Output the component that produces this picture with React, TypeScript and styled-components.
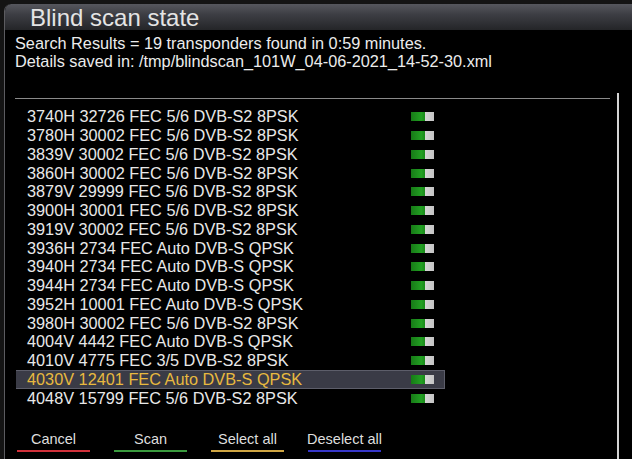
import styled, { createGlobalStyle } from "styled-components";

const GlobalStyle = createGlobalStyle`
    html, body {
        margin: 0;
        padding: 0;
        background: #141414;
        overflow: hidden;
    }
    body {
        font-family: "Liberation Sans", Arial, sans-serif;
        color: #e6e6e6;
    }
`;

interface Transponder {
    label: string
}

const transponders: Transponder[] = [
    { label: "3740H 32726 FEC 5/6 DVB-S2 8PSK" },
    { label: "3780H 30002 FEC 5/6 DVB-S2 8PSK" },
    { label: "3839V 30002 FEC 5/6 DVB-S2 8PSK" },
    { label: "3860H 30002 FEC 5/6 DVB-S2 8PSK" },
    { label: "3879V 29999 FEC 5/6 DVB-S2 8PSK" },
    { label: "3900H 30001 FEC 5/6 DVB-S2 8PSK" },
    { label: "3919V 30002 FEC 5/6 DVB-S2 8PSK" },
    { label: "3936H 2734 FEC Auto DVB-S QPSK" },
    { label: "3940H 2734 FEC Auto DVB-S QPSK" },
    { label: "3944H 2734 FEC Auto DVB-S QPSK" },
    { label: "3952H 10001 FEC Auto DVB-S QPSK" },
    { label: "3980H 30002 FEC 5/6 DVB-S2 8PSK" },
    { label: "4004V 4442 FEC Auto DVB-S QPSK" },
    { label: "4010V 4775 FEC 3/5 DVB-S2 8PSK" },
    { label: "4030V 12401 FEC Auto DVB-S QPSK" },
    { label: "4048V 15799 FEC 5/6 DVB-S2 8PSK" },
];

const SELECTED = 14;

const buttons = [
    { label: "Cancel", color: "#d0303a" },
    { label: "Scan", color: "#3a9a3e" },
    { label: "Select all", color: "#cfa543" },
    { label: "Deselect all", color: "#3636c8" },
];

export default function App() {
    return (
        <>
            <GlobalStyle />
            <Screen>
                <Window>
                    <TitleBar>Blind scan state</TitleBar>
                    <Body>
                        <Info>
                            <p>Search Results = 19 transponders found in 0:59 minutes.</p>
                            <p>Details saved in: /tmp/blindscan_101W_04-06-2021_14-52-30.xml</p>
                        </Info>
                        <ListFrame>
                            <MainColumn>
                                <List>
                                    {transponders.map((t, i) => (
                                        <Row key={t.label} $selected={i === SELECTED}>
                                            <span>{t.label}</span>
                                            <Toggle />
                                        </Row>
                                    ))}
                                </List>
                                <ButtonBar>
                                    {buttons.map((b) => (
                                        <ColorButton key={b.label} $color={b.color}>{b.label}</ColorButton>
                                    ))}
                                </ButtonBar>
                            </MainColumn>
                            <ScrollBar />
                        </ListFrame>
                    </Body>
                </Window>
            </Screen>
        </>
    );
}

const Screen = styled.div`
    width: 632px;
    height: 459px;
    padding: 4px 0 0 4px;
    box-sizing: border-box;
    overflow: hidden;
`

const Window = styled.div`
    width: 640px;
    height: 470px;
    background: #000;
    border-left: 1px solid #5c5c60;
    border-top-left-radius: 7px;
    overflow: hidden;
`

const TitleBar = styled.div`
    height: 26px;
    line-height: 27px;
    padding-left: 25px;
    font-size: 24px;
    color: #e4e4e4;
    background: linear-gradient(#56575e 0%, #3d3e44 40%, #242528 100%);
    border-top-left-radius: 6px;
`

const Body = styled.div`
    padding: 4px 0 0 10px;
`

const Info = styled.div`
    p {
        margin: 0;
        font-size: 16.3px;
        line-height: 18px;
        color: #ececec;
    }
`

const ListFrame = styled.div`
    display: flex;
    margin-top: 28px;
    height: 380px;
`

const MainColumn = styled.div`
    width: 595px;
    display: flex;
    flex-direction: column;
`

const List = styled.div`
    height: 333px;
    border-top: 1px solid #8a8a8a;
    padding-top: 8.5px;
    box-sizing: border-box;
`

const ScrollBar = styled.div`
    width: 2px;
    margin: -5px 0 0 7px;
    background: #d4d4d4;
`

const Row = styled.div<{ $selected?: boolean }>`
    width: 429px;
    height: 18.75px;
    box-sizing: border-box;
    display: flex;
    align-items: center;
    justify-content: space-between;
    padding: 0 10px 0 11px;
    margin-left: 1px;
    font-size: 16.3px;
    color: ${({ $selected }) => ($selected ? "#e8b93f" : "#e8e8e8")};
    background: ${({ $selected }) => ($selected ? "#3a3b46" : "transparent")};
    border: 1px solid ${({ $selected }) => ($selected ? "#5d5e6a" : "transparent")};
    border-left-width: 0;
    white-space: nowrap;
`

const Toggle = styled.div`
    flex: none;
    width: 23px;
    height: 9px;
    background: linear-gradient(90deg, #177a17 0%, #22a022 45%, #1a8a1a 60%, #d6d6d6 61%, #c4c4c4 100%);
`

const ButtonBar = styled.div`
    display: flex;
    align-items: flex-start;
    gap: 24px;
    padding-left: 2px;
`

const ColorButton = styled.div<{ $color: string }>`
    flex: none;
    width: 73px;
    display: flex;
    justify-content: center;
    white-space: nowrap;
    font-size: 14.5px;
    line-height: 17px;
    color: #dedede;
    padding-bottom: 2px;
    border-bottom: 2px solid ${({ $color }) => $color};
`
